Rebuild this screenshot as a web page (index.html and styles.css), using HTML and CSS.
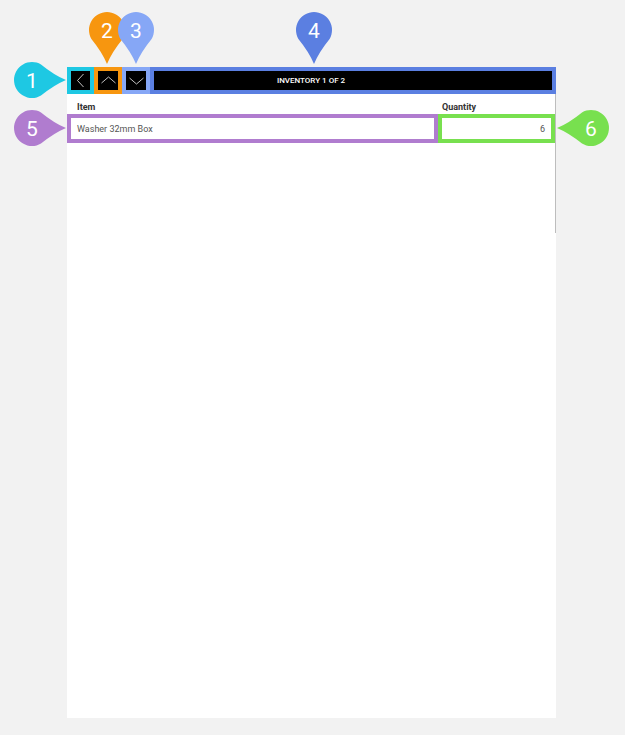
FILE: index.html
```html
<!DOCTYPE html>
<html>
<head>
<meta charset="utf-8">
<link rel="stylesheet" href="styles.css">
</head>
<body>
<div class="stage">
  <div class="panel">
    <div class="toolbar">
      <div class="tool tool-back">
        <div class="btn">
          <svg width="19" height="19" viewBox="0 0 19 19"><path d="M12.5 3 L6.5 9.5 L12.5 16" fill="none" stroke="#c4c4c4" stroke-width="1"/></svg>
        </div>
      </div>
      <div class="tool tool-up">
        <div class="btn">
          <svg width="19" height="19" viewBox="0 0 19 19"><path d="M2.5 12 L9.5 6 L16.5 12" fill="none" stroke="#c4c4c4" stroke-width="1"/></svg>
        </div>
      </div>
      <div class="tool tool-down">
        <div class="btn">
          <svg width="19" height="19" viewBox="0 0 19 19"><path d="M2.5 7 L9.5 13 L16.5 7" fill="none" stroke="#c4c4c4" stroke-width="1"/></svg>
        </div>
      </div>
      <div class="tool tool-title">
        <div class="title">INVENTORY 1 OF 2</div>
      </div>
    </div>
    <div class="form">
      <div class="labels">
        <div class="label label-item">Item</div>
        <div class="label label-qty">Quantity</div>
      </div>
      <div class="fields">
        <div class="field field-item">Washer 32mm Box</div>
        <div class="field field-qty">6</div>
      </div>
    </div>
  </div>
</div>
<svg class="callouts" width="625" height="735" viewBox="0 0 625 735">
  <defs>
    <path id="pin" d="M0 34 Q-5 22 -15.6 9 A18 18 0 1 1 15.6 9 Q5 22 0 34 Z"/>
  </defs>
  <g transform="translate(32 80) rotate(-90)"><use href="#pin" fill="#1ec8e3"/></g>
  <text x="32" y="87.5" class="num">1</text>
  <g transform="translate(107 30)"><use href="#pin" fill="#f7960f"/></g>
  <text x="107" y="37.5" class="num">2</text>
  <g transform="translate(136 30)"><use href="#pin" fill="#86a7f6"/></g>
  <text x="136" y="37.5" class="num">3</text>
  <g transform="translate(314 30)"><use href="#pin" fill="#5b7fe1"/></g>
  <text x="314" y="37.5" class="num">4</text>
  <g transform="translate(32 128) rotate(-90)"><use href="#pin" fill="#b07ccf"/></g>
  <text x="32" y="135.5" class="num">5</text>
  <g transform="translate(591 128) rotate(90)"><use href="#pin" fill="#78e04f"/></g>
  <text x="591" y="135.5" class="num">6</text>
</svg>
</body>
</html>
```
FILE: styles.css
```css
body {
  margin: 0;
  background: #f2f2f2;
  font-family: Roboto, "Liberation Sans", sans-serif;
}

.stage {
  padding: 67px 0 0 67px;
  height: 735px;
  box-sizing: border-box;
}

.panel {
  width: 489px;
  height: 651px;
  background: #ffffff;
}

.toolbar {
  display: flex;
  height: 27px;
}

.tool {
  box-sizing: border-box;
  padding: 4px;
  display: flex;
}

.tool-back { width: 27px; background: #1ec8e3; }
.tool-up { width: 28px; background: #f7960f; }
.tool-down { width: 28px; background: #86a7f6; }
.tool-title { flex: 1; background: #5b7fe1; }

.btn {
  flex: 1;
  background: #000000;
  display: flex;
  align-items: center;
  justify-content: center;
}

.title {
  flex: 1;
  background: #000000;
  color: #ffffff;
  font-size: 8px;
  font-weight: 500;
  display: flex;
  align-items: center;
  justify-content: center;
  padding-right: 84px;
}

.form {
  height: 139px;
  border-right: 1px solid #bdbdbd;
  box-sizing: border-box;
}

.labels {
  display: flex;
  height: 20px;
}

.label {
  font-size: 9px;
  font-weight: 700;
  color: #333333;
  padding-top: 8px;
  line-height: 10px;
  box-sizing: border-box;
}

.label-item { width: 371px; padding-left: 10px; }
.label-qty { padding-left: 4px; }

.fields {
  display: flex;
  height: 29px;
}

.field {
  box-sizing: border-box;
  border: 4px solid;
  display: flex;
  align-items: center;
  font-size: 9px;
  color: #555555;
  background: #ffffff;
}

.field-item {
  width: 371px;
  border-color: #b07ccf;
  padding-left: 6px;
}

.field-qty {
  width: 117px;
  border-color: #78e04f;
  justify-content: flex-end;
  padding-right: 6px;
}

.callouts {
  position: absolute;
  left: 0;
  top: 0;
  pointer-events: none;
}

.num {
  fill: #ffffff;
  font-family: Roboto, "Liberation Sans", sans-serif;
  font-size: 21px;
  text-anchor: middle;
}
```
